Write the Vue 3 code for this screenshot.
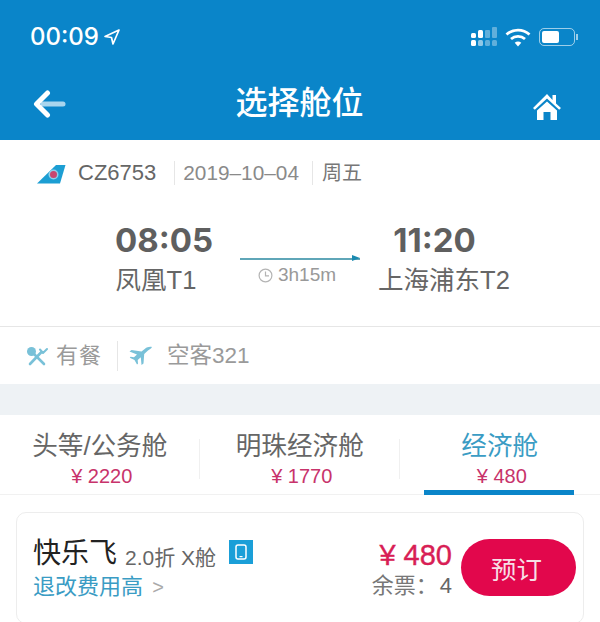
<script setup>
const tabs = [
  { name: '头等/公务舱', price: '¥ 2220' },
  { name: '明珠经济舱', price: '¥ 1770' },
  { name: '经济舱', price: '¥ 480', active: true },
]
</script>

<template>
  <div class="page">
    <header class="head">
      <div class="status">
        <div class="clock">
          <span>00:09</span>
          <svg width="18" height="18" viewBox="0 0 18 18"><path d="M16 2 2 8.500l6.500 1 1.500 6.500z" fill="none" stroke="#fff" stroke-width="1.700" stroke-linejoin="round"/></svg>
        </div>
        <div class="sys">
          <svg width="28" height="20" viewBox="0 0 28 20">
            <g fill="#fff"><rect x="1" y="6" width="5" height="5" rx="1.500"/><rect x="8" y="3" width="5" height="8" rx="1.500"/><rect x="1" y="13" width="5" height="6" rx="1.500"/><rect x="8" y="13" width="5" height="6" rx="1.500" opacity=".55"/></g>
            <g fill="#fff" opacity=".35"><rect x="15" y="3" width="5" height="8" rx="1"/><rect x="22" y="0" width="5" height="11" rx="1"/><rect x="15" y="13" width="5" height="6" rx="1.500"/><rect x="22" y="13" width="5" height="6" rx="1.500"/></g>
          </svg>
          <svg class="wifi" width="26" height="20" viewBox="0 0 26 20" fill="none" stroke="#fff" stroke-width="2.800">
            <path d="M1.500 7.500C8 1.600 18 1.600 24.500 7.500"/><path d="M6 12c4-3.600 10-3.600 14 0"/><path d="M13 19.500 9.700 15.700c2-1.500 4.600-1.500 6.600 0z" fill="#fff" stroke="none"/>
          </svg>
          <div class="battery"><i></i></div>
        </div>
      </div>
      <nav class="nav">
        <svg class="back" width="34" height="28" viewBox="0 0 34 28" fill="none" stroke-linecap="round" stroke-linejoin="round">
          <path d="M10 14h20" stroke="#a9d5ee" stroke-width="5"/>
          <path d="M14.500 3 3.500 14l11 11" stroke="#fff" stroke-width="5"/>
        </svg>
        <h1>选择舱位</h1>
        <svg class="home" width="30" height="28" viewBox="0 0 30 28">
          <path d="M15 1 1 15l1.800 1.800L15 5.500l12.200 11.300L29 15l-5-4.600V2h-3.500v5z" fill="#fff"/>
          <path d="M5 17.500 15 8.500l10 9V27h-6.500v-8h-7v8H5z" fill="#fff"/>
        </svg>
      </nav>
    </header>

    <section class="flight">
      <div class="meta">
        <svg class="tail" width="30" height="22" viewBox="0 0 30 22">
          <path d="M0 20.500 19 2h9.500L23 20.500z" fill="#1c9ed3"/>
          <circle cx="16.500" cy="11.500" r="5" fill="#8fd0ea"/>
          <circle cx="16.500" cy="11.500" r="3.500" fill="#c9476f"/>
        </svg>
        <span class="code">CZ6753</span>
        <span class="sep"></span>
        <span class="date">2019–10–04</span>
        <span class="sep"></span>
        <span class="week">周五</span>
      </div>
      <div class="route">
        <div class="port left">
          <strong>08:05</strong>
          <span>凤凰T1</span>
        </div>
        <div class="line">
          <div class="arrow"></div>
          <div class="dur">
            <svg width="15" height="15" viewBox="0 0 15 15" fill="none" stroke="#b4b4b4" stroke-width="1.200"><circle cx="7.500" cy="7.500" r="6.400"/><path d="M7.500 3.500v4.300h3.500"/></svg>
            <span>3h15m</span>
          </div>
        </div>
        <div class="port right">
          <strong>11:20</strong>
          <span>上海浦东T2</span>
        </div>
      </div>
    </section>

    <section class="amen">
      <svg width="22" height="20" viewBox="0 0 22 20" fill="none" stroke="#79c1d8" stroke-width="2.600" stroke-linecap="round">
        <ellipse cx="5.500" cy="5.500" rx="4.500" ry="4.500" fill="#79c1d8" stroke="none"/>
        <path d="M7 7l11 11"/><path d="M15.500 6 4 18"/><path d="M14 3.500 17 7l4-4" stroke-width="2" stroke-linejoin="round"/>
      </svg>
      <span class="meal">有餐</span>
      <span class="sep tall"></span>
      <svg class="plane" width="24" height="20" viewBox="0 0 24 20"><path d="M23 1c-2.500-.6-5 .2-7 1.700L12.500 5.500 2.500 4 .5 5.500 8 8.500 5 11.300 1.500 10.800.8 11.700l4.700 2.300 2.500 4.500 1-.7-.3-3.800 3.100-2.700.7 7.700 2-1.400.7-9.500 3.800-3.700C20.500 3.700 22 2.700 23 1z" fill="#79c1d8"/></svg>
      <span class="craft">空客321</span>
    </section>

    <div class="gap"></div>

    <section class="tabs">
      <div v-for="t in tabs" :key="t.name" class="tab" :class="{ on: t.active }">
        <div class="tname">{{ t.name }}</div>
        <div class="tprice">{{ t.price }}</div>
      </div>
    </section>

    <section class="card">
      <div class="fare">
        <div class="fline">
          <span class="fname">快乐飞</span>
          <span class="disc">2.0折 X舱</span>
          <span class="badge">
            <svg width="12" height="16" viewBox="0 0 12 16"><rect x="1" y="1" width="10" height="14" rx="2" fill="none" stroke="#fff" stroke-width="1.500"/><rect x="4.500" y="12" width="3" height="1.200" fill="#fff"/></svg>
          </span>
        </div>
        <div class="rule">退改费用高 <em>&gt;</em></div>
      </div>
      <div class="pay">
        <div class="amount">¥ 480</div>
        <div class="left-t"><span>余票：</span><b>4</b></div>
      </div>
      <button class="book">预订</button>
    </section>
  </div>
</template>

<style scoped>
.page {
  width: 600px;
  height: 622px;
  overflow: hidden;
  background: #fff;
  font-family: "Liberation Sans", "Noto Sans CJK SC", sans-serif;
  color: #666;
  display: flex;
  flex-direction: column;
}
.head { background: #0a85c9; height: 140px; flex: none; color: #fff; }
.status {
  height: 70px;
  padding: 4px 23px 0 30px;
  box-sizing: border-box;
  display: flex;
  align-items: center;
  justify-content: space-between;
}
.clock { display: flex; align-items: center; gap: 4px; font-family: "Inter", sans-serif; font-size: 24px; font-weight: 500; line-height: 1; }
.sys { display: flex; align-items: center; gap: 8px; }
.wifi { margin-left: -1px; }
.battery {
  width: 36px; height: 18px; border: 1.500px solid rgba(255,255,255,.6); border-radius: 5px;
  padding: 2px; box-sizing: border-box; position: relative; margin-right: 2px;
}
.battery i { display: block; width: 17px; height: 100%; background: #fff; border-radius: 2px; }
.battery::after { content: ""; position: absolute; right: -4px; top: 5px; width: 2px; height: 6px; background: rgba(255,255,255,.6); }
.nav {
  height: 70px;
  padding: 0 38px 0 33px;
  display: flex;
  align-items: center;
  justify-content: space-between;
}
.back { margin-top: -2px; }
.home { margin-top: 4px; }
.nav h1 { margin: -5px 0 0; font-size: 32px; font-weight: 500; line-height: 1; }

.flight { height: 186px; flex: none; border-bottom: 1px solid #e6e6e6; }
.meta { height: 66px; padding-left: 37px; display: flex; align-items: center; font-size: 22px; color: #777; }
.tail { margin-right: 11px; margin-top: 1px; }
.code { color: #666; margin-right: 18px; }
.sep { width: 1px; height: 24px; background: #e6e6e6; margin-right: 8px; flex: none; }
.date { font-size: 20.800px; color: #8a8a8a; margin-right: 13px; }
.week { font-size: 20px; color: #777; margin: 0 0 4px 1px; }
.route { display: flex; align-items: flex-start; padding-top: 14px; }
.port { display: flex; flex-direction: column; align-items: center; }
.port strong { font-family: "Inter", sans-serif; font-size: 33px; line-height: 40px; font-weight: 700; color: #5f5f5f; }
.port span { font-size: 25.500px; line-height: 40px; color: #666; }
.left { width: 164px; margin-left: 74px; }
.left strong { margin-left: 16px; }
.line { width: 120px; margin-left: 2px; padding-top: 38px; }
.arrow { height: 2px; background: #5fa6b8; position: relative; }
.arrow::after { content: ""; position: absolute; right: 0; top: -3px; border-left: 8px solid #1a8ab0; border-top: 3px solid transparent; border-bottom: 3px solid transparent; }
.dur { display: flex; align-items: center; justify-content: center; gap: 5px; margin: 3px 0 0 -6px; font-size: 19px; line-height: 24px; color: #999; }
.right { width: 168px; }
.right strong { margin-right: 19px; }

.amen { height: 57px; flex: none; padding-left: 26px; display: flex; align-items: center; font-size: 22px; color: #9a9a9a; }
.meal { margin: 0 0 6px 8px; letter-spacing: 1px; }
.tall { height: 30px; margin: 0 11px 0 15px; }
.craft { margin: 0 0 6px 14px; font-size: 22.500px; }

.gap { height: 31px; flex: none; background: #eef2f5; }

.tabs { height: 80px; flex: none; display: flex; border-bottom: 1px solid #f1f1f1; box-sizing: border-box; }
.tab { width: 199.500px; position: relative; text-align: center; padding-top: 13px; box-sizing: border-box; }
.tab:nth-child(2) { width: 200.500px; }
.tab:not(:last-child)::after { content: ""; position: absolute; right: 0; top: 24px; height: 40px; width: 1px; background: #f0f0f0; }
.tname { font-size: 25.600px; line-height: 36px; color: #666; }
.tprice { font-size: 20px; line-height: 24px; color: #c8336b; margin: 0 0 0 4px; }
.tab.on .tname { color: #3a9cc4; }
.tab.on::before { content: ""; position: absolute; left: 24px; right: 26px; bottom: -1px; height: 5px; background: #0a85c9; }

.card {
  margin: 17px 16px 0;
  height: 112px;
  flex: none;
  border: 1px solid #ededed;
  border-radius: 10px;
  box-sizing: border-box;
  display: flex;
  align-items: flex-start;
  padding: 24px 7px 0 16px;
}
.fare { flex: 1; }
.fline { display: flex; align-items: center; height: 34px; }
.fname { font-size: 28px; color: #222; line-height: 34px; }
.disc { font-size: 21px; color: #666; margin-left: 8px; margin-top: 4px; }
.badge { width: 24px; height: 24px; background: #1a9fd8; margin-left: 13px; margin-top: -4px; display: flex; align-items: center; justify-content: center; }
.rule { font-size: 22px; line-height: 32px; color: #3a9cc4; }
.rule em { font-style: normal; color: #aaa; font-size: 20px; margin-left: 3px; }
.pay { text-align: right; margin-right: 9px; margin-top: 1px; }
.amount { font-size: 29px; line-height: 34px; color: #d81e55; -webkit-text-stroke: .4px #d81e55; }
.left-t { font-size: 22px; line-height: 30px; color: #777; margin-top: -1px; }
.left-t b { font-weight: 400; color: #666; margin-left: 2px; }
.book {
  width: 115px;
  height: 57px;
  border: 0;
  border-radius: 29px;
  background: #e2074c;
  color: #f7dfe6;
  font: inherit;
  font-size: 25.500px;
  padding: 0 4px 0 0;
  margin-top: 2px;
}
</style>
